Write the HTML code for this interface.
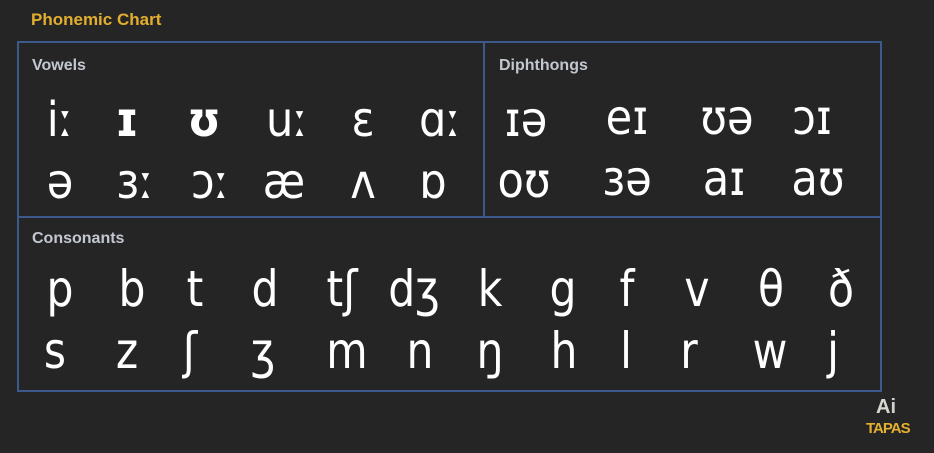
<!DOCTYPE html>
<html><head><meta charset="utf-8"><style>
html,body{margin:0;padding:0;background:#252525;width:934px;height:453px;overflow:hidden;position:relative;font-family:"DejaVu Sans","Liberation Sans",sans-serif}
.t{position:absolute;left:31px;top:10px;color:#e3ae2e;font:bold 17px "Liberation Sans",sans-serif}
.l{position:absolute;color:#c3c7d0;font:bold 16px "Liberation Sans",sans-serif}
.b{position:absolute;background:#3c5a8c}
.g{position:absolute;color:#fff;font-size:48px;line-height:1;transform:translateX(-50%) scaleX(0.9);white-space:nowrap}
.c{font-size:50px;transform:translateX(-50%) scaleX(0.85)}
.logo{position:absolute;font:bold 20px "Liberation Sans",sans-serif}
</style></head><body>
<div class="t">Phonemic Chart</div>
<div class="b" style="left:17px;top:41px;width:865px;height:2px"></div>
<div class="b" style="left:17px;top:390px;width:865px;height:2px"></div>
<div class="b" style="left:17px;top:41px;width:2px;height:351px"></div>
<div class="b" style="left:880px;top:41px;width:2px;height:351px"></div>
<div class="b" style="left:483px;top:41px;width:2px;height:177px"></div>
<div class="b" style="left:17px;top:216px;width:865px;height:2px"></div>
<div class="l" style="left:32px;top:57px">Vowels</div>
<div class="l" style="left:499px;top:57px">Diphthongs</div>
<div class="l" style="left:32px;top:230px">Consonants</div>

<div class="g" style="left:60px;top:96px">iː</div>
<div class="g" style="left:127px;top:96px;font-weight:bold">ɪ</div>
<div class="g" style="left:204px;top:96px;font-weight:bold">ʊ</div>
<div class="g" style="left:287px;top:96px">uː</div>
<div class="g" style="left:363px;top:96px">ɛ</div>
<div class="g" style="left:440px;top:96px">ɑː</div>
<div class="g" style="left:60px;top:158px">ə</div>
<div class="g" style="left:135px;top:158px">ɜː</div>
<div class="g" style="left:210px;top:158px">ɔː</div>
<div class="g" style="left:284px;top:158px">æ</div>
<div class="g" style="left:363px;top:158px">ʌ</div>
<div class="g" style="left:433px;top:158px">ɒ</div>

<div class="g" style="left:526px;top:96px">ɪə</div>
<div class="g" style="left:627px;top:94px">eɪ</div>
<div class="g" style="left:727px;top:94px">ʊə</div>
<div class="g" style="left:812px;top:94px">ɔɪ</div>
<div class="g" style="left:524px;top:157px">oʊ</div>
<div class="g" style="left:627px;top:155px">ɜə</div>
<div class="g" style="left:724px;top:155px">aɪ</div>
<div class="g" style="left:818px;top:155px">aʊ</div>

<div class="g c" style="left:60px;top:264px">p</div>
<div class="g c" style="left:132px;top:264px">b</div>
<div class="g c" style="left:195px;top:264px">t</div>
<div class="g c" style="left:265px;top:264px">d</div>
<div class="g c" style="left:342px;top:264px">tʃ</div>
<div class="g c" style="left:414px;top:264px">dʒ</div>
<div class="g c" style="left:490px;top:264px">k</div>
<div class="g c" style="left:563px;top:264px">g</div>
<div class="g c" style="left:627px;top:264px">f</div>
<div class="g c" style="left:697px;top:264px">v</div>
<div class="g c" style="left:771px;top:264px">θ</div>
<div class="g c" style="left:841px;top:264px">ð</div>
<div class="g c" style="left:55px;top:326px">s</div>
<div class="g c" style="left:127px;top:326px">z</div>
<div class="g c" style="left:190px;top:326px">ʃ</div>
<div class="g c" style="left:263px;top:326px">ʒ</div>
<div class="g c" style="left:347px;top:326px">m</div>
<div class="g c" style="left:420px;top:326px">n</div>
<div class="g c" style="left:490px;top:326px">ŋ</div>
<div class="g c" style="left:564px;top:326px">h</div>
<div class="g c" style="left:626px;top:326px">l</div>
<div class="g c" style="left:689px;top:326px">r</div>
<div class="g c" style="left:770px;top:326px">w</div>
<div class="g c" style="left:833px;top:326px">j</div>

<div class="logo" style="left:876px;top:396px;color:#d8d8d0">A<span style="color:#cfcfcf">i</span></div>
<div class="logo" style="left:866px;top:420px;font-size:15px;color:#e4b030;letter-spacing:-1px">TAPAS</div>
</body></html>
